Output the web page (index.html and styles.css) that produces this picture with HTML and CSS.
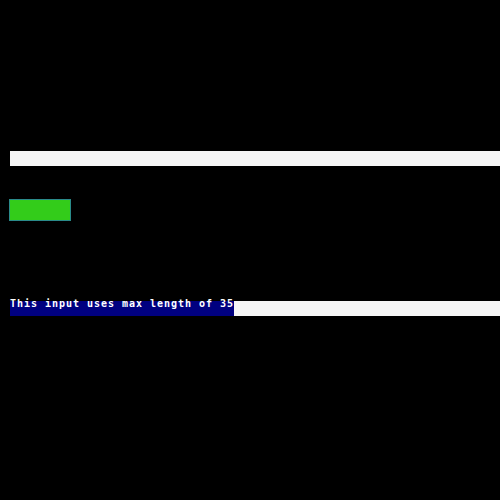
FILE: index.html
```html
<!DOCTYPE html>
<html>
<head>
<meta charset="utf-8">
<link rel="stylesheet" href="styles.css">
</head>
<body>
<div class="page">
  <div class="bar bar-first"></div>
  <div class="button"></div>
  <div class="bar bar-second">
    <div class="sel"><span class="sel-text">This input uses max length of 35</span></div>
  </div>
</div>
</body>
</html>
```
FILE: styles.css
```css
html, body {
  margin: 0;
  padding: 0;
  background: #000000;
  width: 500px;
  height: 500px;
  overflow: hidden;
}
.page {
  display: flex;
  flex-direction: column;
  align-items: flex-start;
  padding: 151px 0 0 10px;
}
.bar {
  width: 490px;
  height: 15px;
  background: #f6f6f6;
}
.button {
  margin-top: 33px;
  margin-left: -1px;
  width: 60px;
  height: 20px;
  background: #33cc1a;
  border: 1px solid #2a8a8a;
}
.bar-second {
  margin-top: 80px;
  display: flex;
}
.sel {
  width: 224px;
  height: 15px;
  background: #000080;
  display: flex;
  align-items: flex-start;
}
.sel-text {
  margin-top: -2px;
  font-family: "DejaVu Sans Mono", monospace;
  font-weight: bold;
  font-size: 10px;
  line-height: 10px;
  letter-spacing: 0.98px;
  color: #ffffff;
  white-space: nowrap;
}
```
